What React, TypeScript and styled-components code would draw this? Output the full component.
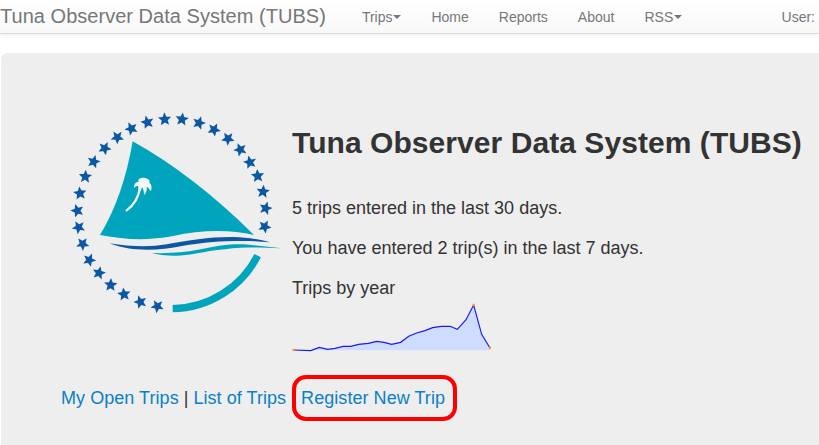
import React from 'react';
import styled, { createGlobalStyle } from 'styled-components';

const GlobalStyle = createGlobalStyle`
    html, body {
        margin: 0;
        height: 100%;
        overflow: hidden;
        background: #fff;
        font-family: "Liberation Sans", Arial, sans-serif;
        color: #333;
    }
`;

const Navbar = styled.nav`
    display: flex;
    align-items: center;
    height: 33px;
    white-space: nowrap;
    overflow: hidden;
    background: linear-gradient(to bottom, #fff 0%, #f8f8f8 100%);
    border-bottom: 1px solid #d9d9d9;
    box-shadow: 0 1px 5px rgba(0, 0, 0, 0.07);
`;

const Brand = styled.a`
    font-size: 20px;
    letter-spacing: 0.03px;
    color: #777;
    margin-right: 36px;
`;

const NavLink = styled.a`
    display: inline-flex;
    align-items: center;
    font-size: 14px;
    color: #777;
    margin-right: 30px;
`;

const Caret = styled.span`
    width: 0;
    height: 0;
    margin-left: 1px;
    border-top: 4px solid #777;
    border-left: 4px solid transparent;
    border-right: 4px solid transparent;
`;

const UserLabel = styled.span`
    margin-left: auto;
    margin-right: 4px;
    font-size: 14px;
    color: #777;
`;

const Jumbotron = styled.main`
    margin: 19px 0 0 1px;
    padding: 47px 0 0 59px;
    height: 392px;
    box-sizing: border-box;
    background: #eee;
    border-radius: 6px 0 0 0;
`;

const Hero = styled.section`
    display: flex;
    gap: 2px;
    align-items: flex-start;
`;

const Logo = styled.svg`
    display: block;
    width: 230px;
    height: 220px;
    flex-shrink: 0;
`;

const Summary = styled.div`
    display: flex;
    flex-direction: column;
    white-space: nowrap;
`;

const Title = styled.h1`
    margin: 24px 0 0;
    font-size: 30px;
    letter-spacing: 0.06px;
    line-height: 38px;
    font-weight: bold;
    color: #333;
`;

const Stat = styled.p`
    margin: 0;
    font-size: 18px;
    line-height: 22px;
    padding-top: 18px;

    &:first-of-type {
        padding-top: 35px;
    }
`;

const Spark = styled.svg`
    display: block;
    margin-top: 1px;
    width: 220px;
    height: 54px;
`;

const Links = styled.div`
    display: flex;
    align-items: center;
    margin-top: 21px;
    margin-left: 1px;
    font-size: 18px;
    letter-spacing: 0.05px;
    color: #333;
    white-space: nowrap;
`;

const TripLink = styled.a`
    color: #0a80c8;
`;

const Divider = styled.span`
    margin: 0 5px;
`;

const Highlight = styled.span`
    display: inline-flex;
    align-items: center;
    height: 46px;
    box-sizing: border-box;
    margin-left: 6px;
    padding: 0 8px 0 5px;
    border: 4px solid #f00;
    border-radius: 14px;
`;

// centres of the ring of stars, in the logo's viewBox
const STARS: [number, number][] = [
    [292, 619], [241, 606], [192, 583], [152, 555], [117, 519], [88, 480], [68, 432],
    [56, 382], [52, 332], [60, 280], [76, 230], [101, 185], [134, 145], [172, 112],
    [214, 86], [262, 67], [314, 58], [366, 58], [417, 69], [462, 89], [504, 116],
    [541, 149], [570, 187], [593, 228], [609, 275], [617, 325], [614, 380],
];

// each star has one tip pointing away from the middle of the ring
function starPoints(cx: number, cy: number, r: number) {
    const start = Math.atan2(cy - 335, cx - 330);
    const pts: string[] = [];
    for (let i = 0; i < 10; i++) {
        const rad = i % 2 === 0 ? r : r * 0.45;
        const a = start + (i * Math.PI) / 5;
        pts.push(`${cx + rad * Math.cos(a)},${cy + rad * Math.sin(a)}`);
    }
    return pts.join(' ');
}

function SpcLogo() {
    return (
        <Logo viewBox="0 0 690 660">
            {STARS.map(([x, y], i) => (
                <polygon key={i} points={starPoints(x, y, 21)} fill="#0b57a4" />
            ))}
            <path
                d="M218 124 Q190 290 120 405 C200 420 260 422 340 408 C420 390 510 388 582 405 Q400 225 218 124 Z"
                fill="#00a5bd"
            />
            <path
                d="M200 331 C222 315 236 290 240 262"
                fill="none"
                stroke="#f3f6f6"
                strokeWidth="7"
                strokeLinecap="round"
            />
            <path
                d="M222 264 C222 250 228 246 236 246 C230 236 248 230 262 236 C268 238 270 244 268 248 C276 254 276 266 272 274 C268 266 264 262 260 260 C262 270 258 280 252 285 C252 274 250 266 246 262 C244 270 240 278 234 281 C236 272 236 264 234 258 C230 258 226 260 222 264 Z"
                fill="#f3f6f6"
            />
            <path
                d="M148 430 C210 440 270 442 320 433 C390 420 450 410 520 411 C560 412 600 418 630 427 C590 423 555 422 520 423 C460 424 420 430 370 437 C320 446 280 452 230 448 C200 446 170 438 148 430 Z"
                fill="#0b57a4"
            />
            <path
                d="M275 459 C310 460 335 459 360 457 C400 453 430 445 460 440 C500 433 530 432 550 433 C590 436 630 440 665 445 C620 442 580 442 540 443 C510 445 480 449 450 453 C420 458 390 466 350 467 C320 468 295 464 275 459 Z"
                fill="#00a5bd"
            />
            <path d="M338 626 A292 292 0 0 0 593 467" fill="none" stroke="#00a5bd" strokeWidth="22" />
        </Logo>
    );
}

// trips per year, traced in a 660x210 box
const TRIPS: [number, number][] = [
    [41, 180], [92, 182], [118, 172], [143, 178], [165, 175], [190, 169], [212, 169],
    [236, 163], [265, 160], [290, 154], [312, 157], [335, 163], [362, 157], [386, 139],
    [410, 129], [435, 122], [458, 113], [484, 109], [510, 109], [532, 118], [558, 89],
    [581, 45], [605, 133], [630, 174],
];

function Sparkline() {
    const line = TRIPS.map(([x, y]) => `${x},${y}`).join(' ');
    return (
        <Spark viewBox="36 30 660 162">
            <polygon points={`41,181 ${line} 630,181`} fill="#cddcff" />
            <polyline points={line} fill="none" stroke="#1a1aee" strokeWidth="3.5" />
            <circle cx="41" cy="180" r="4" fill="#ff9a1f" />
            <circle cx="581" cy="45" r="4" fill="#ff9a1f" />
            <circle cx="630" cy="174" r="4" fill="#ff9a1f" />
        </Spark>
    );
}

export default function App() {
    return (
        <>
            <GlobalStyle />
            <Navbar>
                <Brand>Tuna Observer Data System (TUBS)</Brand>
                <NavLink>
                    Trips
                    <Caret />
                </NavLink>
                <NavLink>Home</NavLink>
                <NavLink>Reports</NavLink>
                <NavLink>About</NavLink>
                <NavLink>
                    RSS
                    <Caret />
                </NavLink>
                <UserLabel>User:</UserLabel>
            </Navbar>
            <Jumbotron>
                <Hero>
                    <SpcLogo />
                    <Summary>
                        <Title>Tuna Observer Data System (TUBS)</Title>
                        <Stat>5 trips entered in the last 30 days.</Stat>
                        <Stat>You have entered 2 trip(s) in the last 7 days.</Stat>
                        <Stat>Trips by year</Stat>
                        <Sparkline />
                    </Summary>
                </Hero>
                <Links>
                    <TripLink>My Open Trips</TripLink>
                    <Divider>|</Divider>
                    <TripLink>List of Trips</TripLink>
                    <Highlight>
                        <TripLink>Register New Trip</TripLink>
                    </Highlight>
                </Links>
            </Jumbotron>
        </>
    );
}
